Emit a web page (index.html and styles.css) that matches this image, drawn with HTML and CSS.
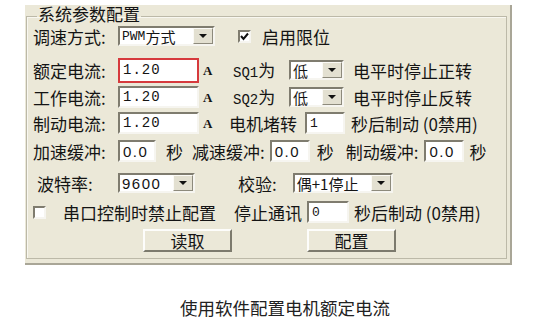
FILE: index.html
```html
<!DOCTYPE html>
<html lang="zh-CN">
<head>
    <meta charset="UTF-8">
    <title>系统参数配置</title>
    <link rel="stylesheet" href="styles.css">
</head>
<body>
    <div class="window">
        <fieldset class="group">
            <legend>系统参数配置</legend>

            <div class="row r1">
                <span class="lbl">调速方式:</span>
                <div class="combo w97">
                    <span class="val"><span class="mono-s">PWM</span>方式</span>
                    <span class="drop"><i></i></span>
                </div>
                <span class="check on ml23">
                    <svg width="9" height="9" viewBox="0 0 9 9"><polyline points="1,4 3.5,7 8,1.5" fill="none" stroke="#111" stroke-width="2"/></svg>
                </span>
                <span class="txt ml11">启用限位</span>
            </div>

            <div class="row r2">
                <span class="lbl">额定电流:</span>
                <span class="field w81 tall active mono">1.20</span>
                <span class="unit">A</span>
                <span class="sq"><span class="mono-sq">SQ1</span>为</span>
                <div class="combo w55">
                    <span class="val">低</span>
                    <span class="drop"><i></i></span>
                </div>
                <span class="txt ml9">电平时停止正转</span>
            </div>

            <div class="row r3">
                <span class="lbl">工作电流:</span>
                <span class="field w81 mono">1.20</span>
                <span class="unit">A</span>
                <span class="sq"><span class="mono-sq">SQ2</span>为</span>
                <div class="combo w55">
                    <span class="val">低</span>
                    <span class="drop"><i></i></span>
                </div>
                <span class="txt ml9">电平时停止反转</span>
            </div>

            <div class="row r4">
                <span class="lbl">制动电流:</span>
                <span class="field w81 mono">1.20</span>
                <span class="unit">A</span>
                <span class="txt ml-4">电机堵转</span>
                <span class="field w40 ml8 small">1</span>
                <span class="txt ml6">秒后制动 (0禁用)</span>
            </div>

            <div class="row r5">
                <span class="lbl">加速缓冲:</span>
                <span class="field w38 sans">0.0</span>
                <span class="txt ml10">秒</span>
                <span class="txt ml9">减速缓冲:</span>
                <span class="field w40 ml5 sans">0.0</span>
                <span class="txt ml7">秒</span>
                <span class="txt ml12">制动缓冲:</span>
                <span class="field w40 ml6 sans">0.0</span>
                <span class="txt ml5">秒</span>
            </div>

            <div class="row r6">
                <span class="lbl ind">波特率:</span>
                <div class="combo w77">
                    <span class="val sans">9600</span>
                    <span class="drop"><i></i></span>
                </div>
                <span class="txt ml43">校验:</span>
                <div class="combo w100 ml16">
                    <span class="val cjk15">偶+1停止</span>
                    <span class="drop"><i></i></span>
                </div>
            </div>

            <div class="row r7">
                <span class="check"></span>
                <span class="txt ml17">串口控制时禁止配置</span>
                <span class="txt ml18">停止通讯</span>
                <span class="field w42 ml5 small">0</span>
                <span class="txt ml5">秒后制动 (0禁用)</span>
            </div>

            <div class="row r8">
                <button class="btn">读取</button>
                <button class="btn ml75">配置</button>
            </div>
        </fieldset>
    </div>

    <p class="caption">使用软件配置电机额定电流</p>
</body>
</html>
```

FILE: styles.css
```css
body {
    margin: 0;
    background: #fff;
    font-family: "Noto Sans CJK SC", sans-serif;
    color: #141414;
}
.window {
    margin: 5px 0 0 25px;
    width: 485px;
    height: 258px;
    background: #ebe8d8;
    border-right: 2px solid #a9a697;
    border-bottom: 2px solid #a9a697;
}
.group {
    margin: 0 3px 0 1px;
    padding: 0 0 5px 0;
    border: 1px solid #bcb9a8;
    box-shadow: inset 1px 1px 0 #f8f7f0;
}
.group legend {
    margin-left: 10px;
    padding: 0 1px 5px 1px;
    font-size: 17px;
    line-height: 17px;
}
.row {
    display: flex;
    align-items: center;
    height: 26px;
    padding-left: 6px;
    font-size: 17px;
    line-height: 1;
    white-space: nowrap;
}
.r1 { height: 24px; margin-top: -3px; }
.r2 { margin-top: 9px; }
.r3 { margin-top: 1px; }
.r5 { margin-top: 2px; }
.r6 { margin-top: 6px; }
.r7 { margin-top: 3px; }
.r8 { margin-top: 2px; padding-left: 116px; }

.lbl { width: 85px; flex: none; }
.lbl.ind { width: 81px; padding-left: 4px; }
.txt { flex: none; }

.mono { font-family: "Liberation Mono", monospace; font-size: 14px; letter-spacing: 1px; }
.mono-s { font-family: "Liberation Mono", monospace; font-size: 13px; }
.mono-sq { font-family: "Liberation Mono", monospace; font-size: 14px; }
.sans { font-family: "Liberation Sans", sans-serif; font-size: 15px; letter-spacing: 1.5px; }
.small { font-family: "Liberation Mono", monospace; font-size: 13px; }
.cjk15 { font-size: 15px; }

.field {
    flex: none;
    box-sizing: border-box;
    height: 22px;
    display: flex;
    align-items: center;
    padding-left: 3px;
    background: #fff;
    border: 2px solid;
    border-color: #7f7c6f #f6f5f0 #f6f5f0 #7f7c6f;
}
.field.tall { height: 25px; }
.field.active { border-color: #d63a3d; }

.unit {
    flex: none;
    width: 30px;
    padding-left: 4px;
    font-family: "Liberation Serif", serif;
    font-weight: bold;
    font-size: 13px;
}
.sq { flex: none; width: 56px; }

.combo {
    flex: none;
    box-sizing: border-box;
    height: 20px;
    display: flex;
    background: #fff;
    border: 2px solid;
    border-color: #7f7c6f #f6f5f0 #f6f5f0 #7f7c6f;
}
.combo .val {
    flex: 1;
    display: flex;
    align-items: center;
    padding-left: 2px;
    font-size: 15px;
}
.combo .drop {
    width: 20px;
    box-sizing: border-box;
    display: flex;
    align-items: center;
    justify-content: center;
    background: #e3e0d1;
    border: 1px solid;
    border-color: #fbfaf6 #8d8a7c #8d8a7c #fbfaf6;
}
.combo .drop i {
    width: 0;
    height: 0;
    border-left: 4px solid transparent;
    border-right: 4px solid transparent;
    border-top: 4px solid #111;
}

.check {
    flex: none;
    box-sizing: border-box;
    width: 13px;
    height: 13px;
    display: flex;
    align-items: center;
    justify-content: center;
    background: #fff;
    border: 2px solid;
    border-color: #7f7c6f #f6f5f0 #f6f5f0 #7f7c6f;
}

.btn {
    flex: none;
    width: 89px;
    height: 23px;
    padding: 0;
    background: #ebe8d8;
    border: 2px solid;
    border-color: #fdfdfb #7c7a6d #7c7a6d #fdfdfb;
    font-family: "Noto Sans CJK SC", sans-serif;
    font-size: 17px;
    line-height: 1;
    color: #141414;
}

.w38 { width: 38px; }
.w40 { width: 40px; }
.w42 { width: 42px; }
.w55 { width: 55px; }
.w77 { width: 77px; }
.w81 { width: 81px; }
.w97 { width: 97px; }
.w100 { width: 100px; }

.ml-4 { margin-left: -4px; }
.ml5 { margin-left: 5px; }
.ml6 { margin-left: 6px; }
.ml7 { margin-left: 7px; }
.ml8 { margin-left: 8px; }
.ml9 { margin-left: 9px; }
.ml10 { margin-left: 10px; }
.ml11 { margin-left: 11px; }
.ml12 { margin-left: 12px; }
.ml16 { margin-left: 16px; }
.ml17 { margin-left: 17px; }
.ml18 { margin-left: 18px; }
.ml23 { margin-left: 23px; }
.ml43 { margin-left: 43px; }
.ml75 { margin-left: 75px; }

.caption {
    margin: 34px 0 0 0;
    padding-left: 22px;
    text-align: center;
    font-size: 17.5px;
    line-height: 18px;
    color: #222;
}
```
